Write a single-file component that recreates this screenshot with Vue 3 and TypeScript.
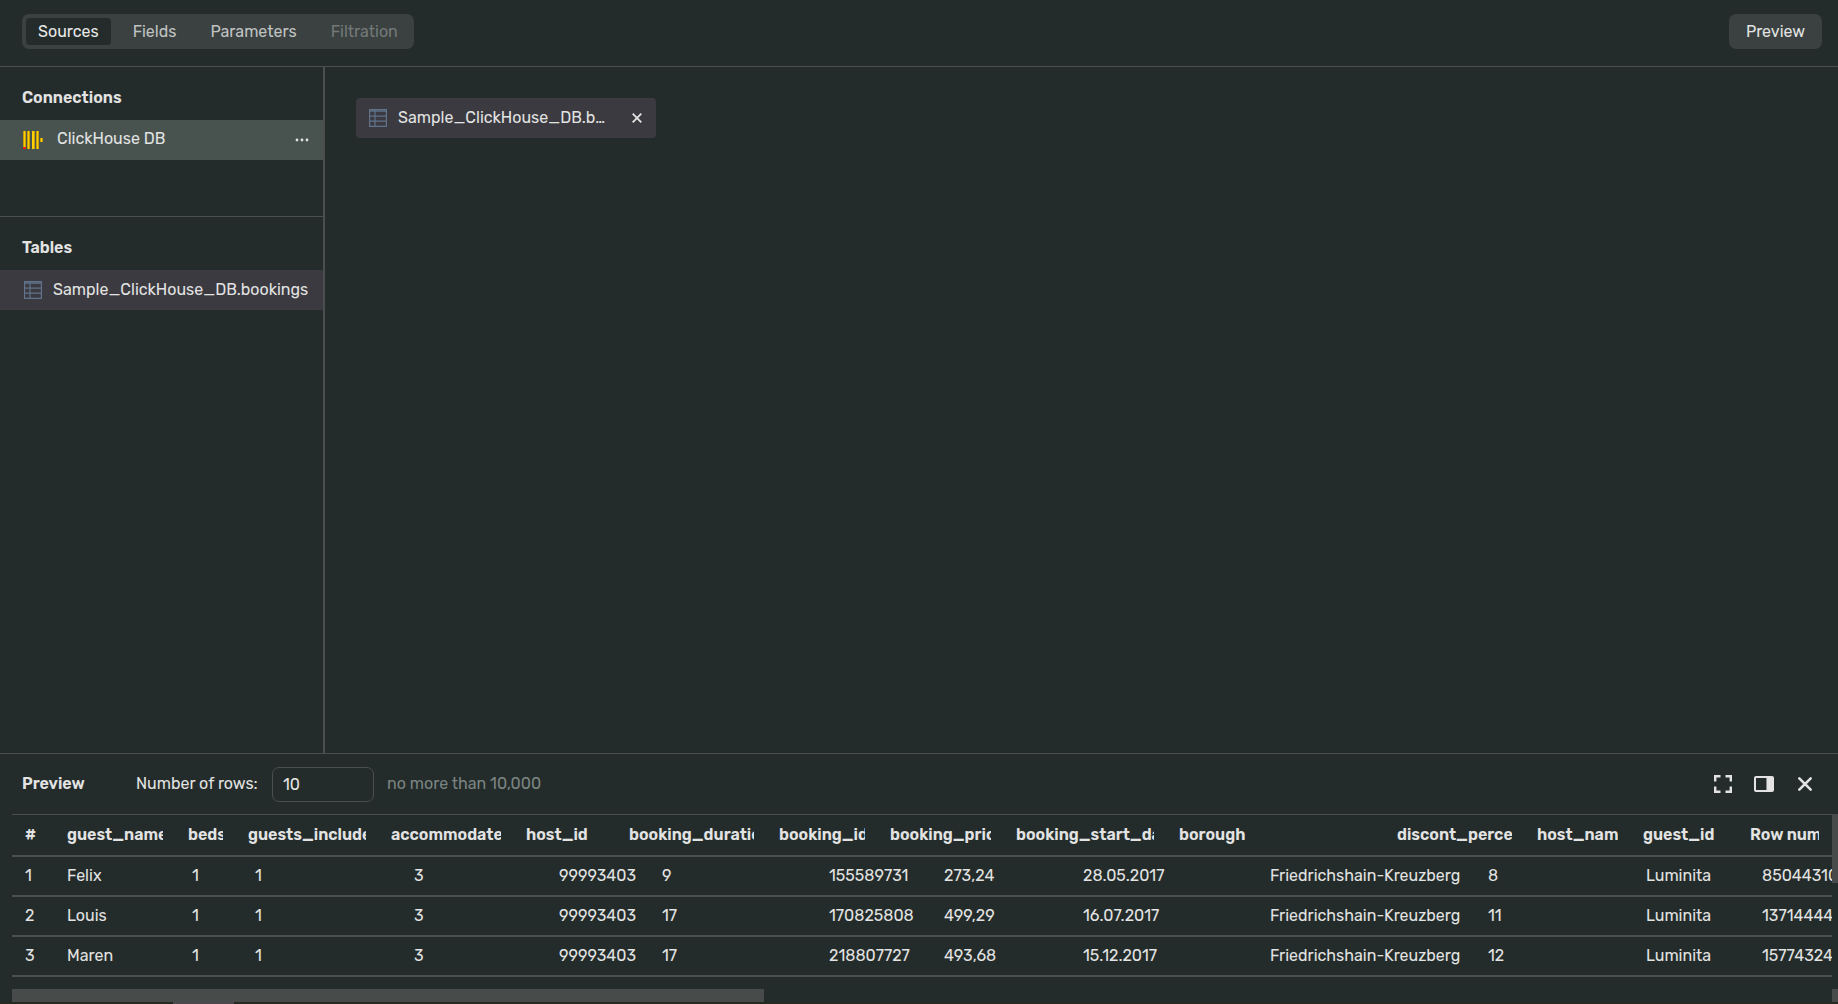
<script setup lang="ts">
import { ref } from 'vue'

interface Tab {
  label: string
  disabled?: boolean
}

const tabs: Tab[] = [
  { label: 'Sources' },
  { label: 'Fields' },
  { label: 'Parameters' },
  { label: 'Filtration', disabled: true },
]
const activeTab = ref('Sources')
const rowLimit = ref('10')

const columns: string[] = [
  '#', 'guest_name', 'beds', 'guests_included', 'accommodates', 'host_id',
  'booking_duration', 'booking_id', 'booking_price', 'booking_start_date',
  'borough', 'discont_percent', 'host_name', 'guest_id', 'Row number',
]

const rows: string[][] = [
  ['1', 'Felix', '1', '1', '3', '99993403', '9', '155589731', '273,24', '28.05.2017', 'Friedrichshain-Kreuzberg', '8', 'Luminita', '85044310'],
  ['2', 'Louis', '1', '1', '3', '99993403', '17', '170825808', '499,29', '16.07.2017', 'Friedrichshain-Kreuzberg', '11', 'Luminita', '13714444'],
  ['3', 'Maren', '1', '1', '3', '99993403', '17', '218807727', '493,68', '15.12.2017', 'Friedrichshain-Kreuzberg', '12', 'Luminita', '15774324'],
]
</script>

<template>
  <div class="app">
    <header class="topbar">
      <nav class="tabs">
        <button
          v-for="tab in tabs"
          :key="tab.label"
          type="button"
          class="tab"
          :class="{ active: tab.label === activeTab }"
          :disabled="tab.disabled"
          @click="activeTab = tab.label"
        >{{ tab.label }}</button>
      </nav>
      <button type="button" class="preview-button">Preview</button>
    </header>

    <div class="workspace">
      <aside class="sidebar">
        <section class="connections">
          <h2 class="heading">Connections</h2>
          <div class="item connection">
            <svg class="db-icon" width="20" height="18" viewBox="0 0 20 18" aria-hidden="true">
              <path fill="#c69c06" d="M0 0h3v18H0zM4 0h3v18H4zM9 0h3v18H9zM13 0h3v18h-3zM17 7h3v4h-3z" />
              <path fill="#ffd000" d="M1 0h1v18H1zM5 0h1v18H5zM9 0h2v18H9zM14 0h1v18h-1zM18 7h1v4h-1z" />
              <path fill="#ee1c10" d="M0 16h3v2H0z" />
            </svg>
            <span class="item-label">ClickHouse DB</span>
            <button type="button" class="icon-button" aria-label="More">
              <svg width="14" height="4" viewBox="0 0 14 4" fill="currentColor"><circle cx="2" cy="2" r="1.4" /><circle cx="7" cy="2" r="1.4" /><circle cx="12" cy="2" r="1.4" /></svg>
            </button>
          </div>
        </section>
        <section class="tables">
          <h2 class="heading">Tables</h2>
          <div class="item table-item">
            <svg class="grid-icon" width="18" height="18" viewBox="0 0 18 18" aria-hidden="true"><path d="M.6.6h16.800v16.800H.6zM.6 2.200h16.800M1 7.200h16M1 12.200h16M6 1v16" /></svg>
            <span class="item-label">Sample_ClickHouse_DB.bookings</span>
          </div>
        </section>
      </aside>

      <main class="canvas">
        <div class="chip">
          <svg class="grid-icon" width="18" height="18" viewBox="0 0 18 18" aria-hidden="true"><path d="M.6.6h16.800v16.800H.6zM.6 2.200h16.800M1 7.200h16M1 12.200h16M6 1v16" /></svg>
          <span class="chip-label">Sample_ClickHouse_DB.bookings</span>
          <button type="button" class="icon-button" aria-label="Remove table">
            <svg width="10" height="10" viewBox="0 0 10 10" fill="none" stroke="currentColor" stroke-width="1.8"><path d="M.7.7l8.600 8.600M9.300.7L.7 9.300" /></svg>
          </button>
        </div>
      </main>
    </div>

    <section class="preview">
      <div class="preview-bar">
        <h2 class="preview-title">Preview</h2>
        <label for="row-limit">Number of rows:</label>
        <input id="row-limit" v-model="rowLimit" type="text" class="row-limit">
        <span class="hint">no more than 10,000</span>
        <div class="actions">
          <button type="button" class="icon-button" aria-label="Full screen">
            <svg width="18" height="18" viewBox="0 0 18 18" fill="none" stroke="currentColor" stroke-width="2.400"><path d="M1.200 6.500V1.200h5.300M11.500 1.200h5.300v5.300M16.800 11.500v5.300h-5.300M6.500 16.800H1.200v-5.300" /></svg>
          </button>
          <button type="button" class="icon-button" aria-label="Dock to the side">
            <svg width="20" height="16" viewBox="0 0 20 16" fill="none"><rect x="1" y="1" width="18" height="14" rx="1" stroke="currentColor" stroke-width="2" /><path fill="currentColor" d="M13 1h6v14h-6z" /><path fill="#8a8e8c" d="M12 2h1v12h-1z" /></svg>
          </button>
          <button type="button" class="icon-button" aria-label="Close preview">
            <svg width="18" height="18" viewBox="0 0 18 18" fill="none" stroke="currentColor" stroke-width="2.600" stroke-linecap="round"><path d="M3.300 3.300l11.400 11.400M14.700 3.300L3.300 14.700" /></svg>
          </button>
        </div>
      </div>

      <div class="grid-area">
        <div class="grid-view">
          <table class="data">
            <thead>
              <tr>
                <th v-for="name in columns" :key="name" scope="col"><div class="clip">{{ name }}</div></th>
              </tr>
            </thead>
            <tbody>
              <tr v-for="row in rows" :key="row[0]">
                <td v-for="(cell, i) in row" :key="i">{{ cell }}</td>
              </tr>
            </tbody>
          </table>
          <div class="h-track"><div class="h-thumb"></div></div>
        </div>
        <div class="v-track"><div class="v-thumb"></div><div class="v-corner"></div></div>
      </div>
      <div class="edge"><div class="edge-mark"></div></div>
    </section>
  </div>
</template>

<style>
body {
  background: #242c2b;
}
</style>

<style scoped>
.app {
  display: flex;
  flex-direction: column;
  height: 100vh;
  overflow: hidden;
  background: #242c2b;
  color: #e2e3e2;
  font-family: Rubik, Inter, Roboto, sans-serif;
  font-size: 16px;
  line-height: 20px;
}
.app * {
  box-sizing: border-box;
}
button,
input {
  font: inherit;
  color: inherit;
}
button {
  border: 0;
  background: none;
  padding: 0;
}
.topbar {
  flex: none;
  display: flex;
  align-items: flex-start;
  justify-content: space-between;
  height: 67px;
  padding: 14px 16px 0 22px;
  border-bottom: 1px solid #4a4e4d;
}
.tabs {
  display: flex;
  gap: 10px;
  height: 35px;
  padding: 4px;
  border-radius: 7px;
  background: #3a4140;
}
.tab {
  padding: 0 12px;
  border-radius: 4px;
  color: #c1c3c3;
}
.tab.active {
  background: #242b2b;
  color: #e8e9e8;
}
.tab:disabled {
  color: #747978;
}
.preview-button {
  width: 93px;
  height: 35px;
  border-radius: 7px;
  background: #3a4140;
}
.workspace {
  flex: 1;
  min-height: 0;
  display: flex;
}
.sidebar {
  flex: none;
  width: 325px;
  border-right: 2px solid #4a4e4d;
}
.connections {
  height: 150px;
  border-bottom: 1px solid #4a4e4d;
}
.heading {
  margin: 0;
  padding: 21px 22px 12px;
  font-size: 16px;
  font-weight: 600;
}
.item {
  display: flex;
  align-items: center;
  height: 40px;
}
.connection {
  padding: 0 14px 0 23px;
  gap: 14px;
  background: #485350;
}
.connection .item-label {
  padding-bottom: 2px;
}
.table-item {
  padding-left: 24px;
  gap: 11px;
  background: #3b3a40;
}
.item-label {
  flex: 1;
  white-space: nowrap;
}
.db-icon {
  flex: none;
}
.grid-icon {
  flex: none;
  fill: none;
  stroke: #60738a;
  stroke-width: 1.2;
}
.icon-button {
  display: flex;
  align-items: center;
  justify-content: center;
}
.canvas {
  flex: 1;
  min-width: 0;
  padding: 31px;
}
.chip {
  display: flex;
  align-items: center;
  gap: 11px;
  width: 300px;
  height: 40px;
  padding: 0 14px 0 13px;
  border-radius: 4px;
  background: #3b3a40;
}
.chip-label {
  width: 214px;
  overflow: hidden;
  text-overflow: ellipsis;
  white-space: nowrap;
}
.chip .icon-button {
  margin-left: auto;
}
.preview {
  flex: none;
  border-top: 1px solid #4a4e4d;
}
.preview-bar {
  display: flex;
  align-items: center;
  height: 60px;
  padding: 0 24px 0 22px;
}
.preview-title {
  width: 114px;
  margin: 0;
  font-size: 16px;
  font-weight: 600;
}
.preview-bar label {
  width: 136px;
  white-space: nowrap;
}
.row-limit {
  width: 102px;
  height: 35px;
  padding: 0 10px;
  border: 1px solid #4a4e4d;
  border-radius: 7px;
  background: transparent;
  outline: 0;
}
.hint {
  margin-left: 13px;
  color: #7b8481;
}
.actions {
  display: flex;
  align-items: center;
  gap: 22px;
  margin-left: auto;
}
.grid-area {
  display: flex;
  padding-left: 12px;
}
.grid-view {
  flex: 1;
  min-width: 0;
  overflow: hidden;
}
.data {
  display: block;
}
.data thead,
.data tbody {
  display: block;
}
.data tr {
  display: grid;
  height: 40px;
  align-items: center;
  border-bottom: 2px solid #4a4e4d;
}
.data thead tr {
  grid-template-columns: 42px 121px 60px 143px 135px 103px 150px 111px 126px 163px 218px 140px 106px 107px 94px;
  height: 43px;
  border-top: 1px solid #4a4e4d;
}
.data tbody tr {
  grid-template-columns: 42px 125px 63px 159px 145px 103px 167px 115px 139px 187px 218px 158px 116px 94px;
}
.data th,
.data td {
  min-width: 0;
  padding: 0 12px 0 13px;
  text-align: left;
  white-space: nowrap;
}
.data th {
  font-weight: 600;
}
.clip {
  overflow: hidden;
}
.h-track {
  padding-top: 12px;
}
.h-thumb {
  width: 752px;
  height: 13px;
  background: #474b4a;
}
.v-track {
  flex: none;
  display: flex;
  flex-direction: column;
  justify-content: space-between;
  width: 6px;
}
.v-thumb {
  height: 69px;
  background: #474b4a;
}
.v-corner {
  height: 13px;
  background: #474b4a;
}
.edge {
  height: 2px;
  padding-left: 173px;
  background: #262a20;
}
.edge-mark {
  width: 61px;
  height: 2px;
  background: #4c4a4c;
}
</style>
